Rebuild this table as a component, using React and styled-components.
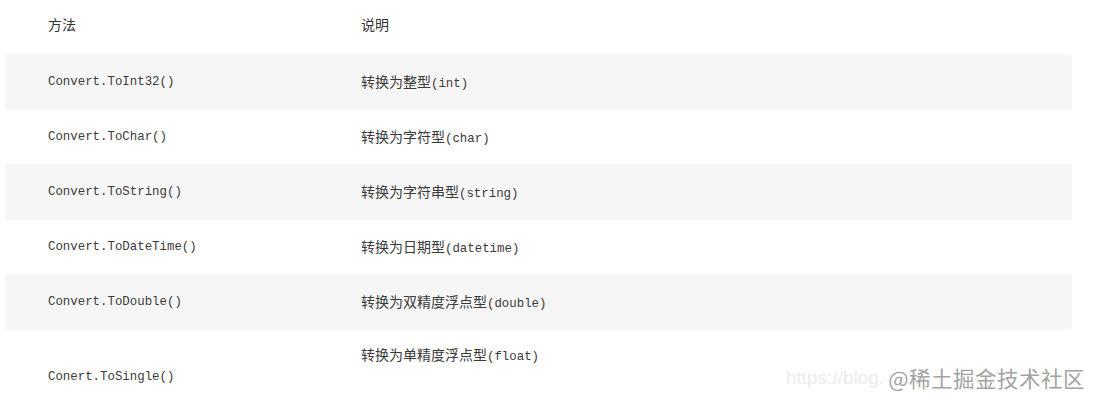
import React from "react";
import styled, { createGlobalStyle } from "styled-components";

const Global = createGlobalStyle`
  html, body { margin: 0; padding: 0; background: #ffffff; }
  body { font-family: "Noto Sans CJK SC", "Noto Sans", sans-serif; color: #3d3d3d; overflow: hidden; }
`;

const Page = styled.div`
  position: relative;
  width: 1099px;
  height: 409px;
  overflow: hidden;
  background: #fff;
`;

const Table = styled.div`
  margin-left: 5px;
  width: 1067px;
  display: flex;
  flex-direction: column;
`;

const Row = styled.div`
  display: grid;
  grid-template-columns: 313px 1fr;
  height: ${(p) => p.$h}px;
  background: ${(p) => (p.$striped ? "#f6f6f6" : "transparent")};
  border-radius: 2px;
`;

const Cell = styled.div`
  display: flex;
  align-items: ${(p) => (p.$top ? "flex-start" : "center")};
  padding-left: 43px;
  padding-top: ${(p) => (p.$top ? "13px" : "0")};
  padding-bottom: ${(p) => p.$pb || 0}px;
  font-size: 14px;
  line-height: 22px;
  color: #3a3a3a;
`;

const Line = styled.div`
  white-space: pre;
  line-height: 22px;
`;

const Head = styled(Cell)`
  color: #333;
  padding-bottom: 6px;
`;

const Code = styled.span`
  font-family: "Liberation Mono", "DejaVu Sans Mono", monospace;
  font-size: 12.4px;
  color: #3a3a3a;
`;

const Zh = styled.span`
  font-family: "Noto Sans CJK SC", sans-serif;
  font-size: 14px;
  color: #3a3a3a;
`;

const Watermark = styled.div`
  position: absolute;
  right: 14px;
  bottom: 16px;
  display: flex;
  align-items: center;
  gap: 4px;
`;

const Url = styled.span`
  font-family: "Liberation Sans", Arial, sans-serif;
  font-size: 19px;
  color: #ececec;
  white-space: nowrap;
`;

const Brand = styled.span`
  font-family: "Noto Sans CJK SC", sans-serif;
  font-size: 21.5px;
  color: #a3a3a3;
  text-shadow: 0 0 2px #fff, 0 0 4px #fff;
  white-space: nowrap;
  letter-spacing: 0.5px;
`;

const rows = [
  { m: "Convert.ToInt32()", zh: "转换为整型", en: "(int)", h: 56, s: true },
  { m: "Convert.ToChar()", zh: "转换为字符型", en: "(char)", h: 54 },
  { m: "Convert.ToString()", zh: "转换为字符串型", en: "(string)", h: 56, s: true },
  { m: "Convert.ToDateTime()", zh: "转换为日期型", en: "(datetime)", h: 54 },
  { m: "Convert.ToDouble()", zh: "转换为双精度浮点型", en: "(double)", h: 56, s: true },
];

export default function App() {
  return (
    <Page>
      <Global />
      <Table>
        <Row $h={54}>
          <Head>方法</Head>
          <Head>说明</Head>
        </Row>
        {rows.map((r) => (
          <Row key={r.m} $h={r.h} $striped={r.s}>
            <Cell>
              <Code>{r.m}</Code>
            </Cell>
            <Cell>
              <Line>
                <Zh>{r.zh}</Zh>
                <Code>{r.en}</Code>
              </Line>
            </Cell>
          </Row>
        ))}
        <Row $h={94}>
          <Cell $pb={1}>
            <Code>Conert.ToSingle()</Code>
          </Cell>
          <Cell $top>
            <Line>
              <Zh>转换为单精度浮点型</Zh>
              <Code>(float)</Code>
            </Line>
          </Cell>
        </Row>
      </Table>
      <Watermark>
        <Url>https://blog.</Url>
        <Brand>@稀土掘金技术社区</Brand>
      </Watermark>
    </Page>
  );
}
